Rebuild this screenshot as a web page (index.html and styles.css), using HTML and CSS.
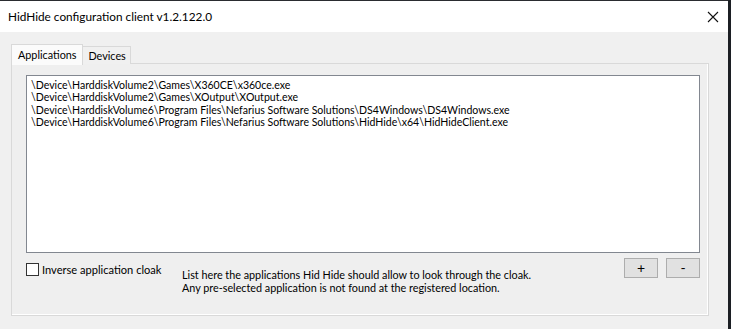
FILE: index.html
```html
<!DOCTYPE html>
<html lang="en">
<head>
  <meta charset="UTF-8" />
  <title>HidHide configuration client</title>
  <link rel="stylesheet" href="styles.css">
</head>
<body>

<div class="window">
  <!-- Title bar -->
  <div class="titlebar">
    <span class="title">HidHide configuration client v1.2.122.0</span>
    <span class="close">
      <svg width="12" height="12" viewBox="0 0 12 12"><path d="M1 1 L11 11 M11 1 L1 11" stroke="#111" stroke-width="1.1"/></svg>
    </span>
  </div>

  <div class="content">
    <div class="tabs">
      <div class="tab active">Applications</div>
      <div class="tab">Devices</div>
    </div>

    <div class="panel">
      <ul class="app-list">
        <li>\Device\HarddiskVolume2\Games\X360CE\x360ce.exe</li>
        <li>\Device\HarddiskVolume2\Games\XOutput\XOutput.exe</li>
        <li>\Device\HarddiskVolume6\Program Files\Nefarius Software Solutions\DS4Windows\DS4Windows.exe</li>
        <li>\Device\HarddiskVolume6\Program Files\Nefarius Software Solutions\HidHide\x64\HidHideClient.exe</li>
      </ul>

      <div class="bottom-row">
        <label class="check"><span class="box"></span>Inverse application cloak</label>
        <p class="hint">List here the applications Hid Hide should allow to look through the cloak.<br>Any pre-selected application is not found at the registered location.</p>
        <div class="buttons">
          <button class="btn">+</button>
          <button class="btn">-</button>
        </div>
      </div>
    </div>
  </div>
</div>

</body>
</html>
```

FILE: styles.css
```css
* {
  margin: 0; padding: 0; box-sizing: border-box;
}
body {
  font-family: 'Lato', 'Noto Sans', sans-serif;
  background: #1c1f24;
  width: 731px;
  height: 329px;
  overflow: hidden;
  color: #000;
}
.window {
  width: 728px;
  height: 329px;
  background: #f0f0f0;
  border-top: 1px solid #2a2c30;
}
.titlebar {
  height: 31px;
  background: #fff;
  display: flex;
  align-items: center;
  justify-content: space-between;
  padding: 0 9px 0 8px;
}
.title {
  font-size: 11.8px;
  margin-top: -1px;
}
.close {
  display: flex;
}
.content {
  padding: 11px 19px 0 11px;
}
.tabs {
  display: flex;
  align-items: flex-end;
  height: 21px;
  position: relative;
  z-index: 1;
}
.tab {
  font-size: 10.8px;
  height: 18px;
  line-height: 17px;
  padding: 0 4px 0 5px;
  border: 1px solid #d9d9d9;
  border-bottom: none;
  background: #f0f0f0;
}
.tab.active {
  height: 21px;
  line-height: 19px;
  padding: 0 6px;
  background: #fbfbfb;
  border-color: #d9d9d9;
  margin-bottom: -1px;
}
.tab + .tab {
  border-left: none;
}
.panel {
  height: 253px;
  margin-top: -1px;
  border: 1px solid #d9d9d9;
  box-shadow: inset -1px -1px 0 #fff;
  background: #efefef;
  padding: 11px 8px 0 14px;
}
.app-list {
  list-style: none;
  height: 178px;
  background: #fff;
  border: 1px solid #828790;
  padding: 3px 4px;
  font-size: 10.55px;
  line-height: 12.4px;
}
.bottom-row {
  display: flex;
  align-items: flex-start;
}
.check {
  display: flex;
  align-items: center;
  margin-top: 10px;
  width: 156px;
  white-space: nowrap;
  font-size: 11.1px;
}
.box {
  width: 13px;
  height: 13px;
  border: 1px solid #333;
  background: #fff;
  margin-right: 3px;
  flex-shrink: 0;
}
.hint {
  margin-top: 15px;
  line-height: 13px;
  font-size: 10.8px;
}
.buttons {
  display: flex;
  gap: 8px;
  margin-left: auto;
  margin-top: 5px;
}
.btn {
  width: 34px;
  height: 20px;
  background: #e1e1e1;
  border: 1px solid #adadad;
  font-family: inherit;
  font-size: 14px;
  line-height: 16px;
  color: #000;
}
```
